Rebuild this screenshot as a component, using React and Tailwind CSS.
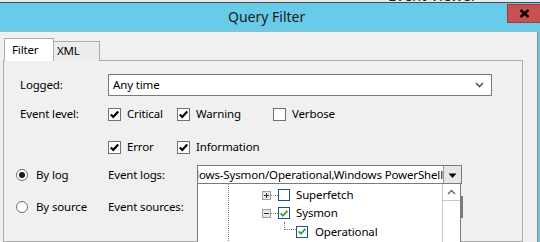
import React from "react";

const font = "font-['Noto_Sans','Open_Sans',sans-serif]";

function Check({ color = "#000", width = 2 }) {
  return (
    <svg width="11" height="11" viewBox="0 0 11 11" className="block">
      <polyline points="1.8,5.4 4.3,8 9.2,2.6" fill="none" stroke={color} strokeWidth={width} />
    </svg>
  );
}

function CheckBox({ checked, label }) {
  return (
    <div className="flex items-center h-[20px]">
      <span className="w-[13px] h-[13px] border border-[#707070] bg-white flex items-center justify-center">
        {checked ? <Check width={2.2} /> : null}
      </span>
      <span className="ml-[6px]">{label}</span>
    </div>
  );
}

function Radio({ checked, label }) {
  return (
    <div className="flex items-center">
      <span className="w-[12px] h-[12px] rounded-full border border-[#707070] bg-white flex items-center justify-center">
        {checked ? <span className="w-[6px] h-[6px] rounded-full bg-[#1a1a1a]" /> : null}
      </span>
      <span className="ml-[8px]">{label}</span>
    </div>
  );
}

function TreeBox({ checked }) {
  return (
    <span className="w-[12px] h-[12px] border border-[#1d5189] bg-white flex items-center justify-center">
      {checked ? <Check color="#3a9a3a" width={2} /> : null}
    </span>
  );
}

function Expander({ open }) {
  return (
    <span className="w-[9px] h-[9px] border border-[#a0a0a0] bg-[#e8e8e8] flex items-center justify-center">
      <svg width="7" height="7" viewBox="0 0 7 7" className="block">
        <path d="M1 3.5H6" stroke="#333" strokeWidth="1" />
        {open ? null : <path d="M3.5 1V6" stroke="#333" strokeWidth="1" />}
      </svg>
    </span>
  );
}

export default function App() {
  return (
    <div className={`w-[540px] h-[242px] overflow-hidden flex flex-col bg-[#68cbea] text-[11.5px] tracking-[-0.15px] text-black ${font}`}>
      <div className="h-[3px] shrink-0 bg-[#eaeaea] border-b border-[#4a4a4a] overflow-hidden">
        <div className="pl-[388px] -mt-[12px] text-[15px] leading-[15px] text-[#222]">Event Viewer</div>
      </div>

      <div className="h-[29px] shrink-0 flex items-start border-b border-[#9ab8c4]">
        <div className="pl-[228px] pt-[5px] text-[14px] tracking-normal leading-[18px] text-[#1a1a1a]">Query Filter</div>
        <div className="ml-auto mt-[1px] w-[33px] h-[19px] bg-[#c75050] border border-[#9b3b3b] border-r-0 flex items-center justify-center">
          <svg width="11" height="9" viewBox="0 0 11 9" className="block">
            <path d="M1.5 1L9.5 8M9.5 1L1.5 8" stroke="#000" strokeWidth="2.4" />
          </svg>
        </div>
      </div>

      <div className="flex-1 min-h-0 flex mr-[2px]">
        <div className="flex-1 min-h-0 bg-[#f0f0f0] border-r border-[#8f8f8f] pt-[6px] pl-[3px] flex flex-col">
          <div className="flex items-end ml-[1px] h-[23px] shrink-0 relative z-10 -mb-px">
            <div className="w-[50px] h-[23px] bg-white border border-b-0 border-[#acacac] pl-[7px] pt-[3px] leading-[16px]">
              Filter
            </div>
            <div className="w-[46px] h-[20px] bg-[#ececec] border border-l-0 border-b-0 border-[#acacac] pl-[3px] pt-[1px] leading-[16px]">
              XML
            </div>
          </div>

          <div className="w-[520px] flex-1 border border-[#acacac] bg-[#f0f0f0] pt-[13px]">
            <div className="flex pl-[16px]">
              <div className="w-[88px] flex flex-col">
                <div className="h-[22px] flex items-center">Logged:</div>
                <div className="mt-[8px] h-[20px] flex items-center">Event level:</div>
              </div>
              <div className="flex flex-col">
                <div className="w-[384px] h-[22px] bg-white border border-[#7a7a7a] flex items-center pl-[4px] pr-[7px]">
                  <span>Any time</span>
                  <svg width="9" height="6" viewBox="0 0 9 6" className="ml-auto block">
                    <path d="M1 1L4.5 4.5L8 1" fill="none" stroke="#555" strokeWidth="1.6" />
                  </svg>
                </div>
                <div className="mt-[8px] grid grid-cols-[69px_96px_auto] gap-y-[13px]">
                  <CheckBox checked label="Critical" />
                  <CheckBox checked label="Warning" />
                  <CheckBox label="Verbose" />
                  <CheckBox checked label="Error" />
                  <CheckBox checked label="Information" />
                </div>
              </div>
            </div>

            <div className="mt-[8px] pl-[12px] flex flex-col">
              <div className="flex items-center h-[19px]">
                <div className="w-[92px] shrink-0">
                  <Radio checked label="By log" />
                </div>
                <div className="w-[89px] shrink-0">Event logs:</div>
                <div className="relative w-[265px] h-[19px]">
                  <div className="w-full h-full bg-white border border-[#7a7a7a] flex overflow-hidden">
                    <div className="flex-1 min-w-0 overflow-hidden flex justify-end whitespace-nowrap leading-[17px]">
                      Microsoft-Windows-Sysmon/Operational,Windows PowerShell
                    </div>
                    <div className="w-[18px] h-full bg-[#e6e6e6] border-l border-[#9a9a9a] flex items-center justify-center">
                      <svg width="9" height="6" viewBox="0 0 9 6" className="block mt-[2px]">
                        <path d="M0.5 0.5H8.5L4.5 5Z" fill="#000" />
                      </svg>
                    </div>
                  </div>

                  <div className="absolute left-0 top-full w-[264px] h-[70px] bg-white border border-[#7a7a7a] border-t-0 z-20 flex">
                    <div className="relative flex-1">
                      <div className="absolute left-[30px] top-0 bottom-0 border-l border-dotted border-[#808080]" />
                      <div className="flex flex-col pt-[2px]">
                        <div className="h-[18px] flex items-center pl-[64px]">
                          <Expander />
                          <span className="w-[7px] border-t border-dotted border-[#808080]" />
                          <TreeBox />
                          <span className="ml-[6px]">Superfetch</span>
                        </div>
                        <div className="h-[18px] flex items-center pl-[64px]">
                          <Expander open />
                          <span className="w-[7px] border-t border-dotted border-[#808080]" />
                          <TreeBox checked />
                          <span className="ml-[6px]">Sysmon</span>
                        </div>
                        <div className="h-[18px] flex items-start pl-[86px]">
                          <span className="w-[12px] h-[8px] border-l border-b border-dotted border-[#808080]" />
                          <span className="mt-[1px] flex items-center">
                            <TreeBox checked />
                            <span className="ml-[7px]">Operational</span>
                          </span>
                        </div>
                      </div>
                    </div>
                    <div className="w-[18px] border-l border-[#c8c8c8] flex flex-col">
                      <div className="h-[17px] border-b border-[#c8c8c8] flex items-center justify-center">
                        <svg width="9" height="6" viewBox="0 0 9 6" className="block">
                          <path d="M1 5L4.5 1.5L8 5" fill="none" stroke="#666" strokeWidth="1.4" />
                        </svg>
                      </div>
                    </div>
                  </div>
                </div>
              </div>

              <div className="mt-[13px] flex items-center h-[20px]">
                <div className="w-[92px] shrink-0">
                  <Radio label="By source" />
                </div>
                <div className="w-[89px] shrink-0">Event sources:</div>
                <div className="w-[266px] h-[22px] bg-white border-[2px] border-[#7a7a7a]" />
              </div>
            </div>
          </div>
        </div>
      </div>
    </div>
  );
}
